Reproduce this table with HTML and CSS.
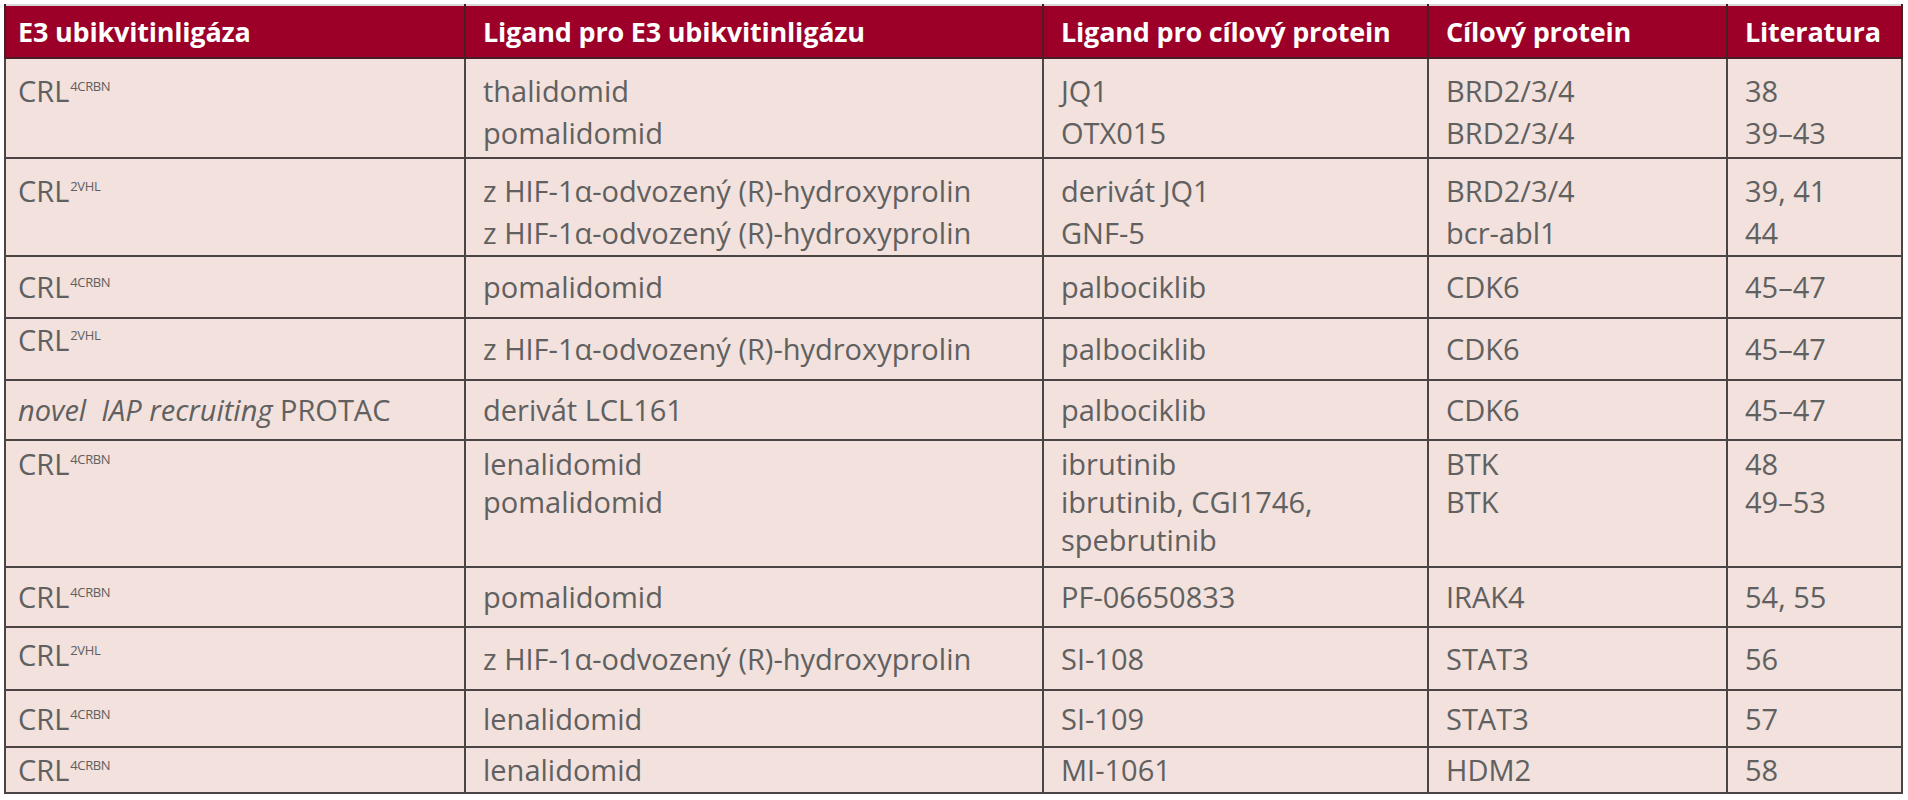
FILE: index.html
```html
<!DOCTYPE html>
<html lang="cs">
<head>
<meta charset="utf-8">
<title>PROTAC tabulka</title>
<link rel="stylesheet" href="styles.css">
</head>
<body>
<table class="tbl">
  <colgroup>
    <col class="c1"><col class="c2"><col class="c3"><col class="c4"><col class="c5">
  </colgroup>
  <thead>
    <tr class="head">
      <th>E3 ubikvitinligáza</th>
      <th>Ligand pro E3 ubikvitinligázu</th>
      <th>Ligand pro cílový protein</th>
      <th>Cílový protein</th>
      <th>Literatura</th>
    </tr>
  </thead>
  <tbody>
    <tr class="multi r1">
      <td>CRL<sup>4CRBN</sup></td>
      <td>thalidomid<br>pomalidomid</td>
      <td>JQ1<br>OTX015</td>
      <td>BRD2/3/4<br>BRD2/3/4</td>
      <td>38<br>39–43</td>
    </tr>
    <tr class="multi r2">
      <td>CRL<sup>2VHL</sup></td>
      <td>z HIF-1α-odvozený (R)-hydroxyprolin<br>z HIF-1α-odvozený (R)-hydroxyprolin</td>
      <td>derivát JQ1<br>GNF-5</td>
      <td>BRD2/3/4<br>bcr-abl1</td>
      <td>39, 41<br>44</td>
    </tr>
    <tr class="r3">
      <td>CRL<sup>4CRBN</sup></td>
      <td>pomalidomid</td>
      <td>palbociklib</td>
      <td>CDK6</td>
      <td>45–47</td>
    </tr>
    <tr class="r4">
      <td class="lift">CRL<sup>2VHL</sup></td>
      <td>z HIF-1α-odvozený (R)-hydroxyprolin</td>
      <td>palbociklib</td>
      <td>CDK6</td>
      <td>45–47</td>
    </tr>
    <tr class="r5">
      <td><i>novel&nbsp; IAP recruiting</i> PROTAC</td>
      <td>derivát LCL161</td>
      <td>palbociklib</td>
      <td>CDK6</td>
      <td>45–47</td>
    </tr>
    <tr class="multi r6">
      <td>CRL<sup>4CRBN</sup></td>
      <td>lenalidomid<br>pomalidomid</td>
      <td>ibrutinib<br>ibrutinib, CGI1746,<br>spebrutinib</td>
      <td>BTK<br>BTK</td>
      <td>48<br>49–53</td>
    </tr>
    <tr class="r7">
      <td>CRL<sup>4CRBN</sup></td>
      <td>pomalidomid</td>
      <td>PF-06650833</td>
      <td>IRAK4</td>
      <td>54, 55</td>
    </tr>
    <tr class="r8">
      <td class="lift-sm">CRL<sup>2VHL</sup></td>
      <td>z HIF-1α-odvozený (R)-hydroxyprolin</td>
      <td>SI-108</td>
      <td>STAT3</td>
      <td>56</td>
    </tr>
    <tr class="r9">
      <td>CRL<sup>4CRBN</sup></td>
      <td>lenalidomid</td>
      <td>SI-109</td>
      <td>STAT3</td>
      <td>57</td>
    </tr>
    <tr class="r10">
      <td>CRL<sup>4CRBN</sup></td>
      <td>lenalidomid</td>
      <td>MI-1061</td>
      <td>HDM2</td>
      <td>58</td>
    </tr>
  </tbody>
</table>
</body>
</html>
```
FILE: styles.css
```css
html, body {
  margin: 0;
  padding: 0;
  background: #ffffff;
}

body {
  padding: 4px 7px 0 4px;
}

.tbl {
  width: 1897px;
  border-collapse: collapse;
  table-layout: fixed;
  background: #f2e1dc;
  font-family: "Open Sans", "DejaVu Sans", sans-serif;
  border-top: 2px solid #d6d6d6;
}

.c1 { width: 460px; }
.c2 { width: 578px; }
.c3 { width: 385px; }
.c4 { width: 299px; }
.c5 { width: 175px; }

.tbl th {
  background: #9c0029;
  color: #ffffff;
  font-weight: 700;
  font-size: 27px;
  letter-spacing: -0.2px;
  text-align: left;
  padding: 0 10px 0 17px;
  border: 2px solid #4a1c24;
  border-top: 0;
  vertical-align: middle;
  white-space: nowrap;
}

.tbl th:first-child,
.tbl td:first-child {
  padding-left: 12px;
}

.tbl td {
  color: #606060;
  font-weight: 400;
  font-size: 29px;
  line-height: 38px;
  padding: 0 10px 0 17px;
  border: 2px solid #4a4444;
  vertical-align: middle;
  white-space: nowrap;
}

.head { height: 53px; }
.r1 { height: 100px; }
.r2 { height: 98px; }
.r3 { height: 62px; }
.r4 { height: 62px; }
.r5 { height: 60px; }
.r6 { height: 127px; }
.r7 { height: 60px; }
.r8 { height: 63px; }
.r9 { height: 57px; }
.r10 { height: 46px; }

.multi td {
  vertical-align: top;
}

.r1 td {
  line-height: 42px;
  padding-top: 11px;
}

.r2 td {
  line-height: 42px;
  padding-top: 11px;
}

.r6 td {
  padding-top: 4px;
}

.tbl td.lift {
  padding-bottom: 18px;
}

.tbl td.lift-sm {
  padding-bottom: 8px;
}

.tbl sup {
  font-size: 13px;
  line-height: 0;
  vertical-align: 11px;
  margin-left: 1px;
  letter-spacing: -0.4px;
}

.tbl i {
  font-style: italic;
}
```
